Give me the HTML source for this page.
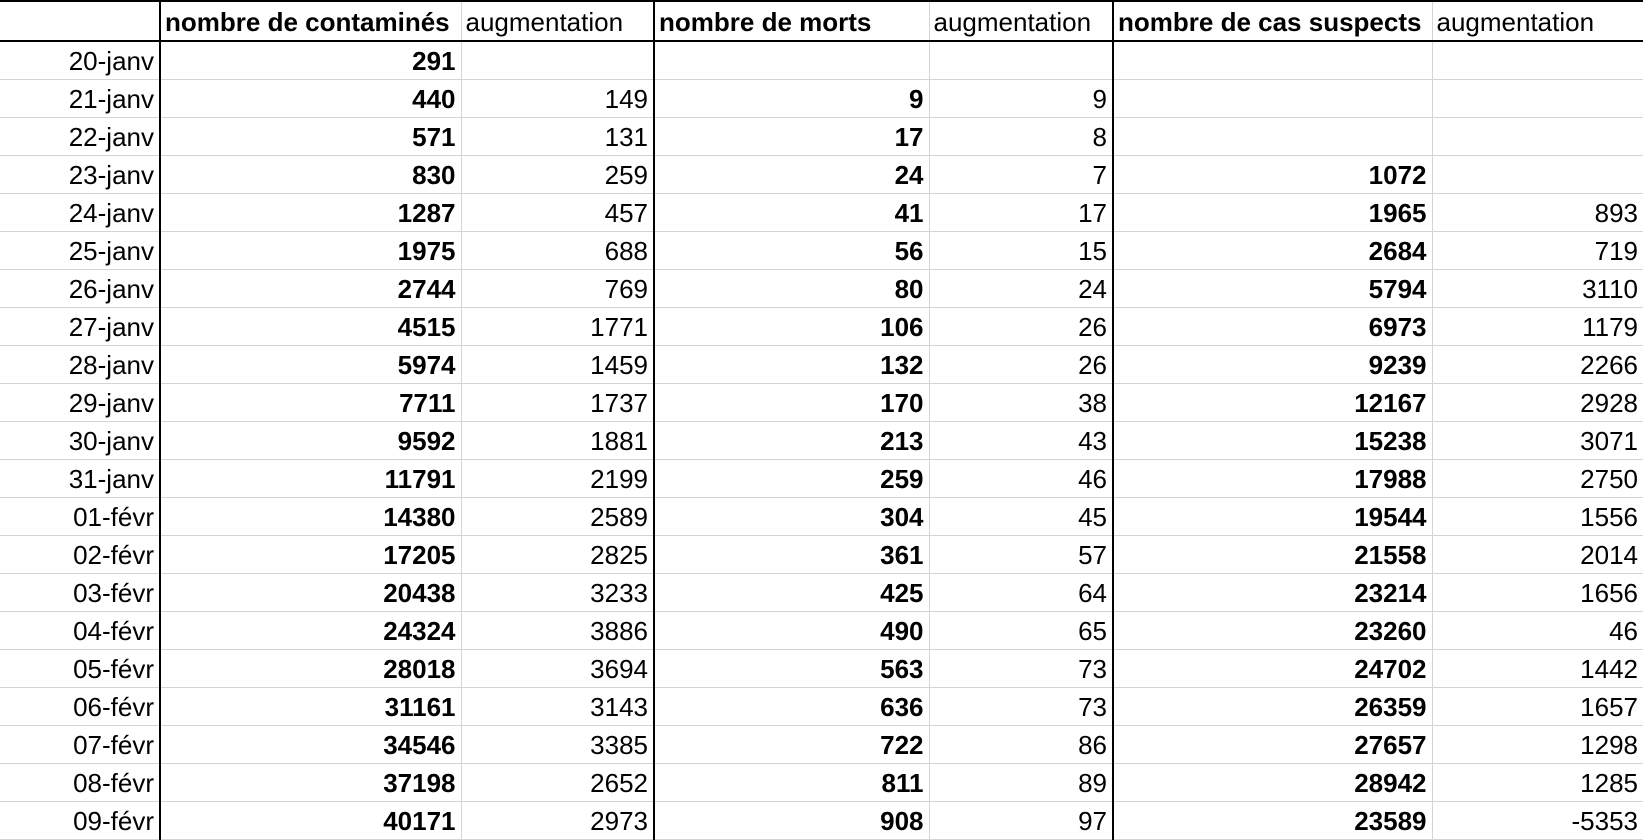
<!DOCTYPE html>
<html><head><meta charset="utf-8"><style>
html,body{margin:0;padding:0;background:#fff;width:1643px;height:838px;overflow:hidden}
table{border-collapse:collapse;table-layout:fixed;font-family:"Liberation Sans",sans-serif;font-size:26px;color:#000;position:absolute;left:0;top:0}
td{height:35px;padding:2px 5px 0 0;text-align:right;border-right:1px solid #d4d4d4;border-bottom:1px solid #d4d4d4;white-space:nowrap;overflow:hidden;line-height:35px}
tr.h td{height:36px;text-align:left;padding:2px 0 0 4px;border-top:2px solid #000;border-bottom:2px solid #000;line-height:36px;vertical-align:top}
td.b{font-weight:bold}
td.k{border-right:2px solid #000}
td.last{border-right:none}
</style></head><body>
<table>
<colgroup><col style="width:160px"><col style="width:301px"><col style="width:193px"><col style="width:275px"><col style="width:184px"><col style="width:319px"><col style="width:211px"></colgroup>
<tr class="h"><td class="k"></td><td class="b">nombre de contaminés</td><td class="k">augmentation</td><td class="b">nombre de morts</td><td class="k">augmentation</td><td class="b">nombre de cas suspects</td><td class="last">augmentation</td></tr>
<tr><td class="k">20-janv</td><td class="b">291</td><td class="k"></td><td class="b"></td><td class="k"></td><td class="b"></td><td class="last"></td></tr>
<tr><td class="k">21-janv</td><td class="b">440</td><td class="k">149</td><td class="b">9</td><td class="k">9</td><td class="b"></td><td class="last"></td></tr>
<tr><td class="k">22-janv</td><td class="b">571</td><td class="k">131</td><td class="b">17</td><td class="k">8</td><td class="b"></td><td class="last"></td></tr>
<tr><td class="k">23-janv</td><td class="b">830</td><td class="k">259</td><td class="b">24</td><td class="k">7</td><td class="b">1072</td><td class="last"></td></tr>
<tr><td class="k">24-janv</td><td class="b">1287</td><td class="k">457</td><td class="b">41</td><td class="k">17</td><td class="b">1965</td><td class="last">893</td></tr>
<tr><td class="k">25-janv</td><td class="b">1975</td><td class="k">688</td><td class="b">56</td><td class="k">15</td><td class="b">2684</td><td class="last">719</td></tr>
<tr><td class="k">26-janv</td><td class="b">2744</td><td class="k">769</td><td class="b">80</td><td class="k">24</td><td class="b">5794</td><td class="last">3110</td></tr>
<tr><td class="k">27-janv</td><td class="b">4515</td><td class="k">1771</td><td class="b">106</td><td class="k">26</td><td class="b">6973</td><td class="last">1179</td></tr>
<tr><td class="k">28-janv</td><td class="b">5974</td><td class="k">1459</td><td class="b">132</td><td class="k">26</td><td class="b">9239</td><td class="last">2266</td></tr>
<tr><td class="k">29-janv</td><td class="b">7711</td><td class="k">1737</td><td class="b">170</td><td class="k">38</td><td class="b">12167</td><td class="last">2928</td></tr>
<tr><td class="k">30-janv</td><td class="b">9592</td><td class="k">1881</td><td class="b">213</td><td class="k">43</td><td class="b">15238</td><td class="last">3071</td></tr>
<tr><td class="k">31-janv</td><td class="b">11791</td><td class="k">2199</td><td class="b">259</td><td class="k">46</td><td class="b">17988</td><td class="last">2750</td></tr>
<tr><td class="k">01-févr</td><td class="b">14380</td><td class="k">2589</td><td class="b">304</td><td class="k">45</td><td class="b">19544</td><td class="last">1556</td></tr>
<tr><td class="k">02-févr</td><td class="b">17205</td><td class="k">2825</td><td class="b">361</td><td class="k">57</td><td class="b">21558</td><td class="last">2014</td></tr>
<tr><td class="k">03-févr</td><td class="b">20438</td><td class="k">3233</td><td class="b">425</td><td class="k">64</td><td class="b">23214</td><td class="last">1656</td></tr>
<tr><td class="k">04-févr</td><td class="b">24324</td><td class="k">3886</td><td class="b">490</td><td class="k">65</td><td class="b">23260</td><td class="last">46</td></tr>
<tr><td class="k">05-févr</td><td class="b">28018</td><td class="k">3694</td><td class="b">563</td><td class="k">73</td><td class="b">24702</td><td class="last">1442</td></tr>
<tr><td class="k">06-févr</td><td class="b">31161</td><td class="k">3143</td><td class="b">636</td><td class="k">73</td><td class="b">26359</td><td class="last">1657</td></tr>
<tr><td class="k">07-févr</td><td class="b">34546</td><td class="k">3385</td><td class="b">722</td><td class="k">86</td><td class="b">27657</td><td class="last">1298</td></tr>
<tr><td class="k">08-févr</td><td class="b">37198</td><td class="k">2652</td><td class="b">811</td><td class="k">89</td><td class="b">28942</td><td class="last">1285</td></tr>
<tr><td class="k">09-févr</td><td class="b">40171</td><td class="k">2973</td><td class="b">908</td><td class="k">97</td><td class="b">23589</td><td class="last">-5353</td></tr>
</table>
</body></html>
